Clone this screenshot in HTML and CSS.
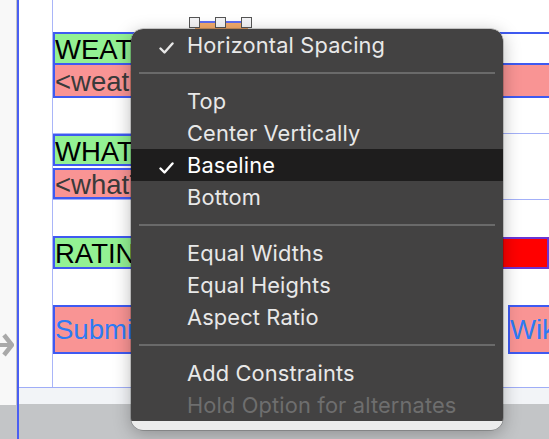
FILE: index.html
```html
<!DOCTYPE html>
<html>
<head>
<meta charset="utf-8">
<link rel="stylesheet" href="styles.css">
</head>
<body>
<div class="page">
  <div class="gutter">
    <div class="gutter-top">
      <svg class="entry-arrow" width="14" height="26" viewBox="0 0 14 26">
        <path d="M0 11 H9 V15 H0 Z" fill="#a9a9a9"/>
        <path d="M4 3 L12 13 L4 23" fill="none" stroke="#a9a9a9" stroke-width="4.5"/>
      </svg>
    </div>
    <div class="gutter-bottom"></div>
  </div>
  <div class="scene">
    <div class="canvas">
      <div class="column">
        <div class="handles-area">
          <div class="orange-view">
            <span class="handle h-left"></span>
            <span class="handle h-mid"></span>
            <span class="handle h-right"></span>
          </div>
        </div>
        <div class="stack1">
          <div class="lbl green w-weather">WEATHER</div>
          <div class="lbl pink full">&lt;weatherLabel&gt;</div>
        </div>
        <div class="stack2">
          <div class="lbl green boxed w-what">WHAT TO SEE</div>
          <div class="lbl pink boxed w-whatlbl">&lt;whatToSeeLabel&gt;</div>
        </div>
        <div class="rating-row">
          <div class="lbl green boxed w-rating">RATING</div>
          <div class="red-bar">
            <span class="stars">★★★★★</span>
          </div>
        </div>
        <div class="button-row">
          <div class="btn b-submit">Submit</div>
          <div class="btn b-clear">Clear Mood</div>
          <div class="btn b-wiki">Wiki</div>
        </div>
      </div>
    </div>
    <div class="strip"></div>
    <div class="toolbar"></div>
  </div>

  <div class="menu">
    <div class="menu-body">
      <div class="item checked">
        <svg class="check" width="15" height="12" viewBox="0 0 15 12"><path d="M1.5 6.5 L5.5 10.5 L13.5 1.5" fill="none" stroke="#e8e8e8" stroke-width="2.4" stroke-linecap="round" stroke-linejoin="round"/></svg>
        <span>Horizontal Spacing</span>
      </div>
      <div class="sep"></div>
      <div class="item"><span>Top</span></div>
      <div class="item"><span>Center Vertically</span></div>
      <div class="item checked active">
        <svg class="check" width="15" height="12" viewBox="0 0 15 12"><path d="M1.5 6.5 L5.5 10.5 L13.5 1.5" fill="none" stroke="#ffffff" stroke-width="2.4" stroke-linecap="round" stroke-linejoin="round"/></svg>
        <span>Baseline</span>
      </div>
      <div class="item"><span>Bottom</span></div>
      <div class="sep"></div>
      <div class="item"><span>Equal Widths</span></div>
      <div class="item"><span>Equal Heights</span></div>
      <div class="item"><span>Aspect Ratio</span></div>
      <div class="sep"></div>
      <div class="item"><span>Add Constraints</span></div>
      <div class="item disabled"><span>Hold Option for alternates</span></div>
    </div>
  </div>
</div>
</body>
</html>
```

FILE: styles.css
```css
html, body {
  margin: 0;
  padding: 0;
}
body {
  width: 549px;
  height: 439px;
  overflow: hidden;
  background: #ffffff;
  font-family: "Liberation Sans", Arial, sans-serif;
}
.page {
  position: relative;
  width: 549px;
  height: 439px;
  display: flex;
  overflow: hidden;
}
.gutter {
  width: 16px;
  flex: 0 0 16px;
  display: flex;
  flex-direction: column;
  border-right: 1px solid #c4c4c8;
}
.gutter-top {
  flex: 1;
  background: #f8f8f8;
  display: flex;
  flex-direction: column;
  justify-content: flex-end;
  padding-bottom: 47px;
}
.entry-arrow {
  display: block;
}
.gutter-bottom {
  height: 34px;
  background: #c3c5c7;
}
.scene {
  flex: 1;
  display: flex;
  flex-direction: column;
  border-left: 2px solid #4a5ff2;
  min-width: 0;
}
.canvas {
  height: 388px;
  flex: 0 0 388px;
  box-sizing: border-box;
  padding-left: 33px;
  border-bottom: 1px solid #9fadf7;
  background: #ffffff;
}
.column {
  height: 100%;
  border-left: 1px solid #a9b5f8;
  display: flex;
  flex-direction: column;
}
.handles-area {
  height: 32px;
  flex: 0 0 32px;
  position: relative;
}
.orange-view {
  position: relative;
  margin-left: 142px;
  margin-top: 21px;
  width: 53px;
  height: 9px;
  border-top: 2px solid #5d6cf0;
  background: #f2aa6c;
}
.handle {
  position: absolute;
  top: -6px;
  width: 9px;
  height: 9px;
  background: #f4f4f6;
  border: 1.5px solid #555;
}
.h-left { left: -6px; }
.h-mid { left: 20px; }
.h-right { left: 46px; }

.lbl {
  box-sizing: border-box;
  font-size: 27.5px;
  line-height: 29px;
  white-space: nowrap;
  overflow: hidden;
  flex-shrink: 0;
}
.green {
  background: #93f193;
  color: #000;
}
.pink {
  background: #f99494;
  color: #3a3a3a;
}
.stack1 {
  border-top: 2px solid #3f5af1;
  border-bottom: 2px solid #3f5af1;
  display: flex;
  flex-direction: column;
  align-items: flex-start;
}
.stack1 .green {
  height: 29px;
  border-left: 2px solid #3f5af1;
  padding-top: 1px;
}
.stack1 .pink {
  height: 33px;
  border-top: 2px solid #3f5af1;
  border-left: 2px solid #3f5af1;
  padding-top: 2px;
  align-self: stretch;
}
.w-weather { width: 160px; }
.stack2 {
  margin-top: 35px;
  border-top: 1px solid #a3b0f8;
  border-bottom: 1px solid #a3b0f8;
  display: flex;
  flex-direction: column;
  align-items: flex-start;
  gap: 2px;
}
.boxed {
  border: 2px solid #3f5af1;
}
.stack2 .green {
  height: 32px;
  padding-top: 1px;
}
.stack2 .pink {
  height: 31px;
}
.w-what { width: 210px; }
.w-whatlbl { width: 260px; }
.rating-row {
  margin-top: 36px;
  height: 33px;
  display: flex;
  align-items: stretch;
}
.w-rating {
  width: 150px;
  padding-top: 1px;
}
.red-bar {
  margin-left: auto;
  width: 206px;
  flex: 0 0 206px;
  margin-top: 1px;
  box-sizing: border-box;
  background: #ff0000;
  border: 2px solid #6a35d4;
  display: flex;
  align-items: center;
  padding-left: 8px;
}
.stars {
  color: #c9c9c9;
  font-family: "DejaVu Sans", sans-serif;
  font-size: 20px;
  letter-spacing: 2px;
}
.button-row {
  margin-top: 36px;
  height: 49px;
  display: flex;
}
.btn {
  box-sizing: border-box;
  height: 49px;
  flex-shrink: 0;
  background: #f99494;
  border: 2px solid #3f5af1;
  color: #2d7bf4;
  font-size: 27.5px;
  line-height: 45px;
  white-space: nowrap;
  overflow: hidden;
}
.b-submit { width: 150px; }
.b-clear { width: 150px; margin-left: 67px; text-align: center; }
.b-wiki { width: 90px; margin-left: 88px; padding-left: 0; }
.strip {
  height: 16px;
  flex: 0 0 16px;
  background: #f2f4f7;
}
.toolbar {
  flex: 1;
  background: #c3c5c7;
}

/* context menu overlay */
.menu {
  position: absolute;
  left: 131px;
  top: 29px;
  width: 372px;
  height: 401px;
  border-radius: 12px;
  overflow: hidden;
  background: #ececec;
  box-shadow: 0 4px 18px rgba(0, 0, 0, 0.28), 0 0 0 0.5px rgba(0, 0, 0, 0.35);
  font-family: Inter, "Liberation Sans", sans-serif;
}
.menu-body {
  height: 392px;
  background: rgba(58, 57, 57, 0.95);
  border-radius: 12px 12px 0 0;
  display: flex;
  flex-direction: column;
}
.item {
  height: 32px;
  flex: 0 0 32px;
  display: flex;
  align-items: center;
  padding-left: 56px;
  position: relative;
  font-size: 21.8px;
  color: #e8e8e8;
  letter-spacing: 0.15px;
}
.item .check {
  position: absolute;
  left: 28px;
  top: 13px;
}
.item.active {
  background: #1e1d1d;
  color: #ffffff;
}
.item.disabled {
  color: #6e6e6e;
}
.sep {
  height: 24px;
  flex: 0 0 24px;
  display: flex;
  align-items: center;
  padding: 0 8px;
}
.sep::before {
  content: "";
  display: block;
  width: 100%;
  height: 2px;
  background: #6a6a6a;
}
```
